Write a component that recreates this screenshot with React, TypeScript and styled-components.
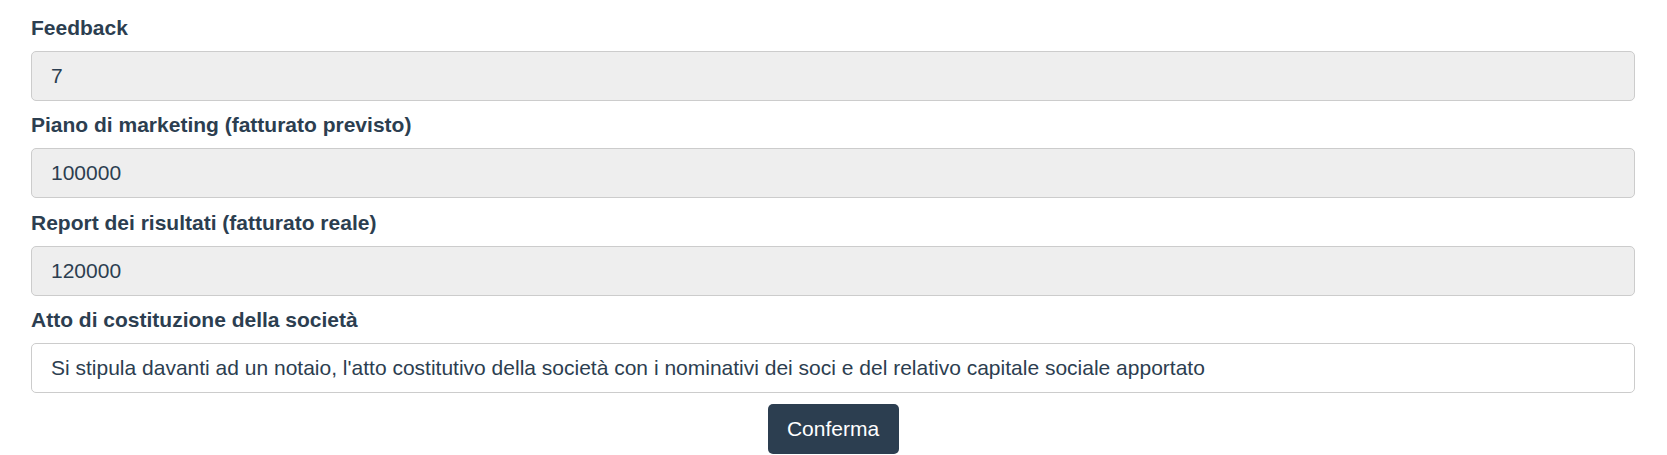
import React from "react";
import styled, { createGlobalStyle } from "styled-components";

const GlobalStyle = createGlobalStyle`
  html, body {
    margin: 0;
    padding: 0;
    background: #ffffff;
  }
  body {
    font-family: "Liberation Sans", Arial, Helvetica, sans-serif;
    color: #2c3e50;
  }
`;

const Form = styled.form`
  display: flex;
  flex-direction: column;
  padding: 14px 32px 0 31px;
`;

const Group = styled.div`
  display: flex;
  flex-direction: column;
  margin-bottom: 10.3px;
`;

const Label = styled.label`
  font-size: 21px;
  line-height: 28px;
  font-weight: 700;
  color: #2c3e50;
  margin-bottom: 9px;
`;

const Field = styled.input<{ $disabled?: boolean }>`
  box-sizing: border-box;
  height: 50px;
  width: 100%;
  padding: 0 19px;
  border: 1px solid #cccccc;
  border-radius: 5px;
  background: ${(p) => (p.$disabled ? "#eeeeee" : "#ffffff")};
  font-family: "Liberation Sans", Arial, Helvetica, sans-serif;
  font-size: 21px;
  color: #2c3e50;
  opacity: 1;
  -webkit-text-fill-color: #2c3e50;
  outline: none;
`;

const Actions = styled.div`
  display: flex;
  justify-content: center;
  margin-top: 1px;
`;

const Button = styled.button`
  box-sizing: border-box;
  height: 50px;
  width: 131px;
  padding: 0;
  border: none;
  border-radius: 5px;
  background: #2c3e50;
  color: #ffffff;
  font-family: "Liberation Sans", Arial, Helvetica, sans-serif;
  font-size: 21px;
  cursor: pointer;
`;

const fields = [
  { label: "Feedback", value: "7", disabled: true },
  { label: "Piano di marketing (fatturato previsto)", value: "100000", disabled: true },
  { label: "Report dei risultati (fatturato reale)", value: "120000", disabled: true },
  {
    label: "Atto di costituzione della società",
    value:
      "Si stipula davanti ad un notaio, l'atto costitutivo della società con i nominativi dei soci e del relativo capitale sociale apportato",
    disabled: false,
  },
];

export default function App() {
  return (
    <>
      <GlobalStyle />
      <Form onSubmit={(e) => e.preventDefault()}>
        {fields.map((f) => (
          <Group key={f.label}>
            <Label>{f.label}</Label>
            <Field
              $disabled={f.disabled}
              disabled={f.disabled}
              defaultValue={f.value}
              readOnly={!f.disabled}
            />
          </Group>
        ))}
        <Actions>
          <Button type="submit">Conferma</Button>
        </Actions>
      </Form>
    </>
  );
}
